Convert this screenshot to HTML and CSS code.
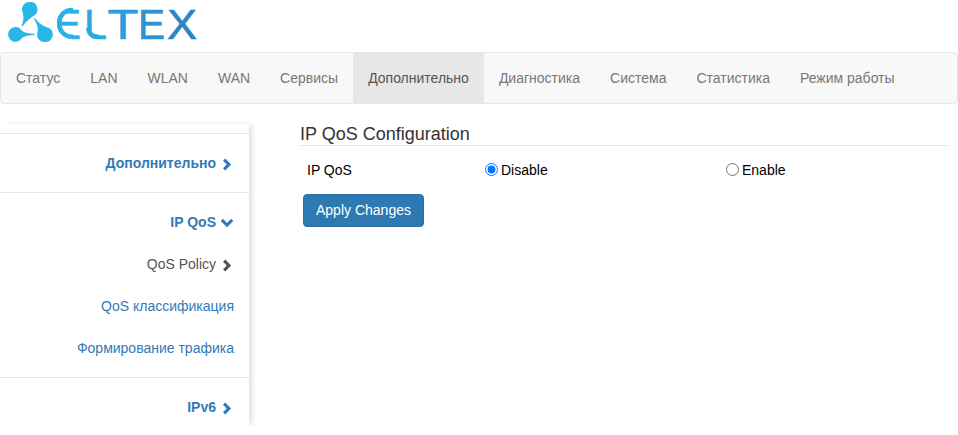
FILE: index.html
```html
<!DOCTYPE html>
<html lang="ru">
<head>
<meta charset="utf-8">
<title>IP QoS Configuration</title>
<link rel="stylesheet" href="styles.css">
</head>
<body>
<header class="brand">
  <svg class="logo" width="200" height="52" viewBox="0 0 200 52" role="img" aria-label="ELTEX">
    <g fill="#29b7ea">
      <path d="M30 2a7.400 7.400 0 0 1 3.800 13.800c-3.500 2-7 5-11.300 10.400l-1-.5c2.200-5 2.400-8.500 1.300-13A7.400 7.400 0 0 1 30 2z"/>
      <path d="M15.500 27a7.400 7.400 0 0 1 6.500 3.800c3 2.300 7 3 12.500 3v1.200c-5.500 0-9.500.7-12.500 3A7.400 7.400 0 1 1 15.500 27z"/>
      <path d="M44.500 42a7.400 7.400 0 0 1-7-9.800c1-4-.5-8.500-3.500-13.500l1-.7c3.300 4.700 6.800 7.500 11.200 9A7.400 7.400 0 0 1 44.500 42z"/>
    </g>
    <g class="wordmark">
      <text fill="#2ab2e6" stroke="#2ab2e6" stroke-width="0.6" transform="translate(54 38.500) scale(.953 1)">E</text>
      <text fill="#2aa9e1" stroke="#2aa9e1" stroke-width="0.6" transform="translate(84 38.500) scale(.974 1)">L</text>
      <text fill="#2a9fdb" stroke="#2a9fdb" stroke-width="0.6" transform="translate(107.500 38.500) scale(1.193 1)">T</text>
      <text fill="#2a93d0" stroke="#2a93d0" stroke-width="0.6" transform="translate(138 38.500) scale(.953 1)">E</text>
      <text fill="#2b85c4" stroke="#2b85c4" stroke-width="0.6" transform="translate(167 38.500) scale(1.059 1)">X</text>
    </g>
    <g fill="#fff">
      <path d="M55 4H72V7.700A14.800 14.800 0 0 0 57 22.500V24A15 15 0 0 0 72 39V40H55z"/>
      <path d="M84 28V40H97V39A11 11 0 0 1 86 28z"/>
    </g>
    <g fill="none" stroke-width="4.400">
      <path stroke="#2ab2e6" d="M73 10H72A12.500 12.500 0 0 0 59.300 22.500V24A12.600 12.600 0 0 0 72 36.700H73"/>
      <path stroke="#2aa9e1" d="M88.300 28A8.700 8.700 0 0 0 97 36.700H99"/>
    </g>
  </svg>
</header>

<nav class="navbar">
  <a class="nav-link" href="#">Статус</a>
  <a class="nav-link" href="#">LAN</a>
  <a class="nav-link" href="#">WLAN</a>
  <a class="nav-link" href="#">WAN</a>
  <a class="nav-link" href="#">Сервисы</a>
  <a class="nav-link active" href="#">Дополнительно</a>
  <a class="nav-link" href="#">Диагностика</a>
  <a class="nav-link" href="#">Система</a>
  <a class="nav-link" href="#">Статистика</a>
  <a class="nav-link" href="#">Режим работы</a>
</nav>

<div class="page">
  <aside class="sidebar">
    <section class="side-group side-group-single">
      <a class="side-head" href="#">Дополнительно
        <svg class="chev" width="12" height="14" viewBox="0 0 12 14"><path d="M2 4.800 4.200 2.600 10.200 8.500 4.200 14.400 2 12.200 5.700 8.500z"/></svg>
      </a>
    </section>
    <section class="side-group">
      <a class="side-head side-head-open" href="#">IP QoS
        <svg class="chev" width="14" height="14" viewBox="0 0 14 14"><path d="M.7 6 2.900 3.800 7 7.900 11.100 3.800 13.300 6 7 12.300z"/></svg>
      </a>
      <a class="side-sub side-sub-parent" href="#">QoS Policy
        <svg class="chev" width="12" height="14" viewBox="0 0 12 14"><path d="M2 4.800 4.200 2.600 10.200 8.500 4.200 14.400 2 12.200 5.700 8.500z"/></svg>
      </a>
      <a class="side-sub" href="#">QoS классификация</a>
      <a class="side-sub" href="#">Формирование трафика</a>
    </section>
    <section class="side-group side-group-last">
      <a class="side-head" href="#">IPv6
        <svg class="chev" width="12" height="14" viewBox="0 0 12 14"><path d="M2 4.800 4.200 2.600 10.200 8.500 4.200 14.400 2 12.200 5.700 8.500z"/></svg>
      </a>
    </section>
  </aside>

  <main class="content">
    <h2 class="title">IP QoS Configuration</h2>
    <form class="qos-form">
      <div class="form-row">
        <span class="field-label">IP QoS</span>
        <label class="choice"><input type="radio" name="qos" checked>Disable</label>
        <label class="choice"><input type="radio" name="qos">Enable</label>
      </div>
      <button class="btn" type="button">Apply Changes</button>
    </form>
  </main>
</div>
</body>
</html>
```
FILE: styles.css
```css
* { box-sizing: border-box; }

html, body { margin: 0; padding: 0; }

body {
  font-family: "Liberation Sans", Arial, sans-serif;
  font-size: 14px;
  line-height: 20px;
  color: #333;
  background: #fff;
  overflow: hidden;
}

a { text-decoration: none; }

.brand { height: 52px; }

.logo { display: block; }

.wordmark {
  font-family: "Liberation Sans", Arial, sans-serif;
  font-size: 42.500px;
}

.navbar {
  display: flex;
  height: 52px;
  background: #f8f8f8;
  border: 1px solid #e7e7e7;
  border-radius: 4px;
}

.nav-link {
  padding: 15px;
  height: 50px;
  color: #777;
}

.nav-link.active {
  background: #e7e7e7;
  color: #555;
}

.page {
  display: flex;
  align-items: flex-start;
  margin-top: 18px;
}

.sidebar {
  flex: 0 0 249px;
  margin-top: 2px;
  padding: 9px 0;
  background: #fff;
  box-shadow: 4px 0 5px -1px rgba(0, 0, 0, 0.12);
}

.side-group {
  display: flex;
  flex-direction: column;
  align-items: flex-end;
  border-top: 1px solid #e7e7e7;
  padding-bottom: 8px;
}

.side-group-single { padding-bottom: 19px; }

.side-group-last { padding-bottom: 0; }

.side-head {
  display: flex;
  align-items: center;
  height: 20px;
  margin: 19px 16px 0 0;
  font-weight: 700;
  color: #337ab7;
  gap: 5px;
}

.side-head-open {
  margin-right: 15px;
  gap: 4px;
}

.side-head + .side-sub { margin-top: 11px; }

.side-sub {
  display: flex;
  align-items: center;
  height: 42px;
  padding-right: 15px;
  color: #337ab7;
}

.side-sub-parent {
  padding-right: 16px;
  gap: 5px;
  color: #555;
}

.chev {
  display: block;
  flex: none;
  fill: currentColor;
  overflow: visible;
}

.content {
  flex: 1;
  min-width: 0;
  padding: 0 9px 0 51px;
}

.title {
  margin: 0;
  height: 24px;
  font-size: 18px;
  font-weight: 400;
  line-height: 24px;
  border-bottom: 1px solid #e5e5e5;
}

.qos-form { padding-left: 3px; }

.form-row {
  display: flex;
  align-items: center;
  height: 48px;
  color: #000;
}

.field-label {
  flex: 0 0 182px;
  padding-left: 4px;
}

.choice {
  display: flex;
  align-items: center;
  flex: 0 0 241px;
}

.choice input {
  width: 13px;
  height: 13px;
  margin: 0 3px 2px 0;
}

.btn {
  display: block;
  height: 33px;
  padding: 0 12px 2px;
  font: inherit;
  color: #fff;
  background: #2d7ab3;
  border: 1px solid #2e6da4;
  border-radius: 4px;
}
```
